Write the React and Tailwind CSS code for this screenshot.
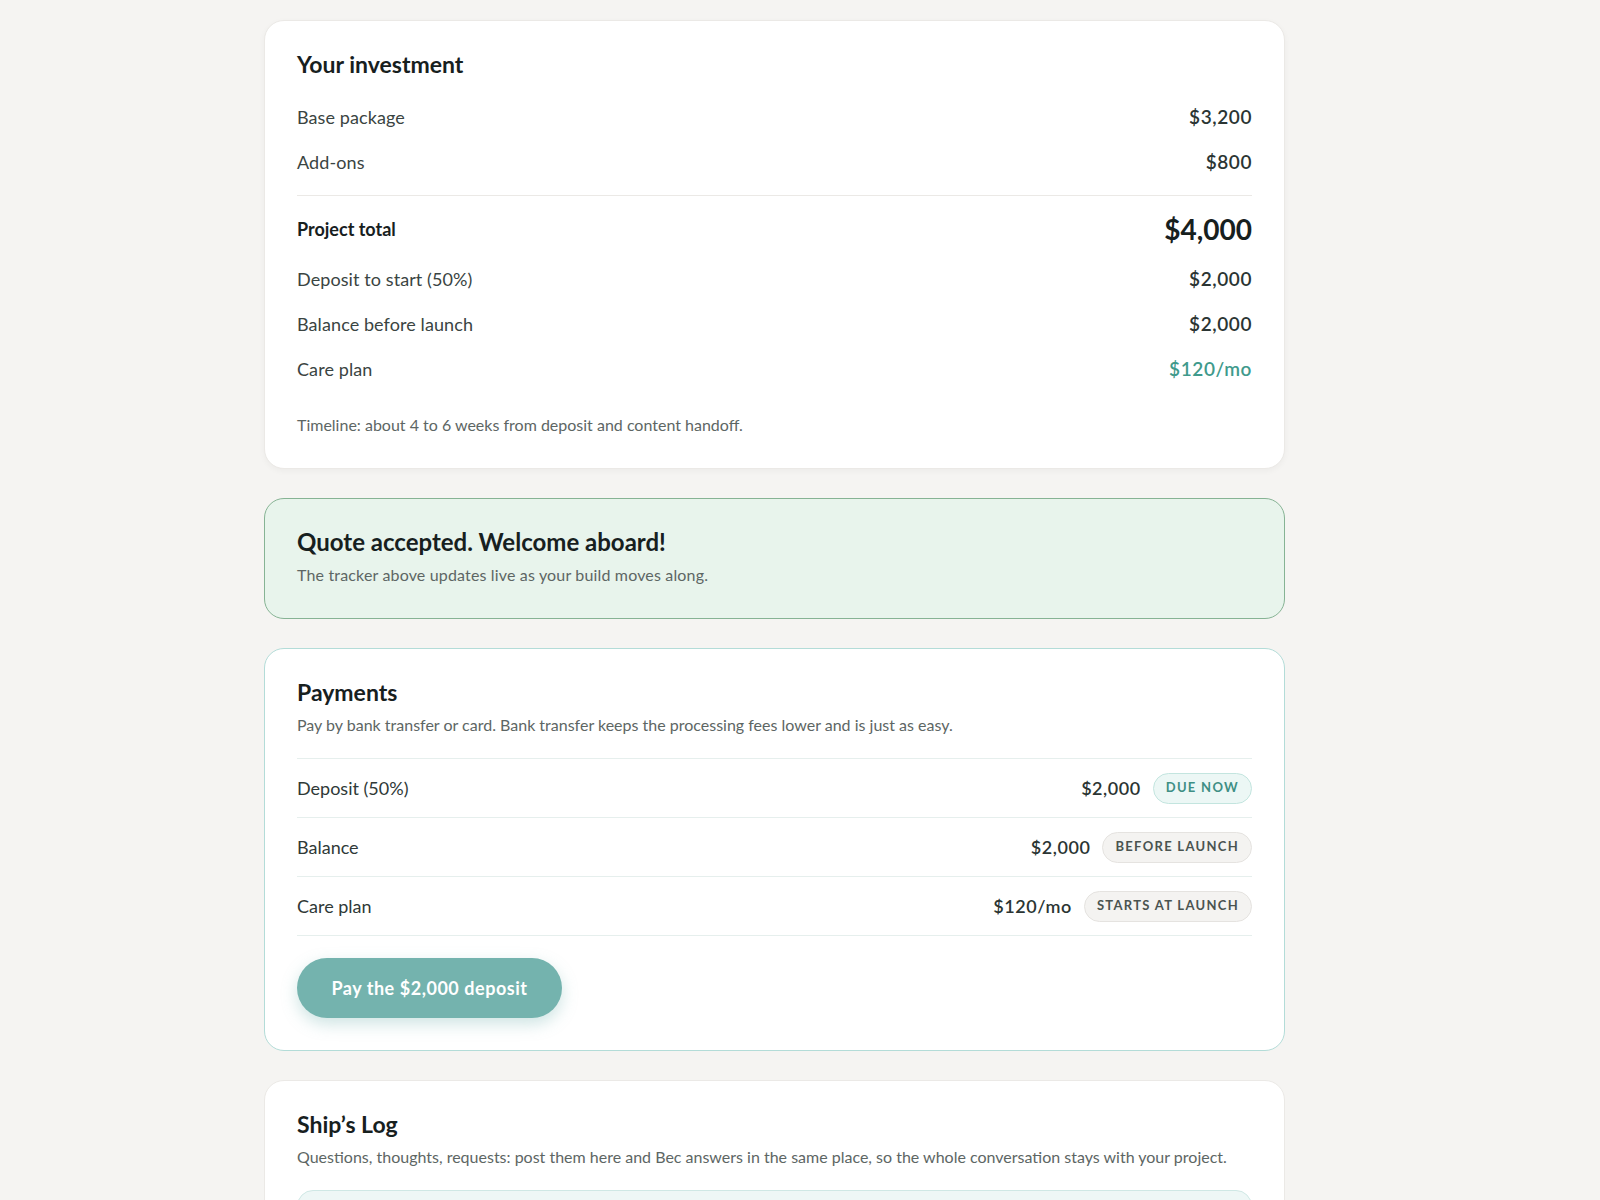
import React from "react";

const font = { fontFamily: "Lato, 'Noto Sans', sans-serif" };

function Row({ label, value, valueClass = "text-[#2b3533] font-semibold" }) {
  return (
    <div className="flex h-[45px] items-center justify-between">
      <span className="text-[18px] tracking-[0.005em] text-[#3a4442]">{label}</span>
      <span className={"text-[19px] tracking-[0.03em] " + valueClass}>{value}</span>
    </div>
  );
}

function PayRow({ label, value, pill, pillClass }) {
  return (
    <div className="flex h-[59px] items-center justify-between border-t border-[#e6efed]">
      <span className="text-[18px] text-[#2f3937]">{label}</span>
      <div className="flex items-center gap-3">
        <span className="text-[18px] font-semibold tracking-[0.03em] text-[#2b3533]">{value}</span>
        <span
          className={
            "flex h-[31px] items-center rounded-full border px-3 text-[13px] font-bold tracking-[0.1em] " +
            pillClass
          }
        >
          {pill}
        </span>
      </div>
    </div>
  );
}

export default function App() {
  return (
    <div className="min-h-[1200px] bg-[#f5f4f2] pb-10 pl-[264px] pt-5" style={font}>
      <div className="flex w-[1021px] flex-col gap-[29px]">
        {/* Investment */}
        <div className="rounded-[20px] border border-[#ebe9e6] bg-white p-8 shadow-[0_2px_6px_rgba(0,0,0,0.04)]">
          <h2 className="text-[23px] font-bold leading-[22px] text-[#17201e]">Your investment</h2>
          <div className="mt-[20px]">
            <Row label="Base package" value="$3,200" />
            <Row label="Add-ons" value="$800" />
          </div>
          <div className="mt-[10px] border-t border-[#ebe9e6]" />
          <div className="mt-[5px] flex h-[56px] items-center justify-between">
            <span className="text-[18px] font-bold text-[#17201e]">Project total</span>
            <span className="text-[28px] font-bold text-[#17201e]">$4,000</span>
          </div>
          <Row label="Deposit to start (50%)" value="$2,000" />
          <Row label="Balance before launch" value="$2,000" />
          <Row label="Care plan" value="$120/mo" valueClass="text-[#3f9a8c] font-semibold" />
          <p className="mt-[21px] text-[16px] leading-[23px] text-[#5d6664]">
            Timeline: about 4 to 6 weeks from deposit and content handoff.
          </p>
        </div>

        {/* Accepted */}
        <div className="rounded-[20px] border border-[#86b394] bg-[#e8f4ec] p-8">
          <h2 className="text-[24px] font-bold leading-[22px] text-[#17201e]">
            Quote accepted. Welcome aboard!
          </h2>
          <p className="mt-[10px] text-[16px] tracking-[0.01em] leading-[23px] text-[#5d6664]">
            The tracker above updates live as your build moves along.
          </p>
        </div>

        {/* Payments */}
        <div className="rounded-[20px] border border-[#b3dcd8] bg-white p-8">
          <h2 className="text-[23px] font-bold leading-[22px] text-[#17201e]">Payments</h2>
          <p className="mt-[10px] text-[16px] leading-[23px] text-[#5d6664]">
            Pay by bank transfer or card. Bank transfer keeps the processing fees lower and is just as easy.
          </p>
          <div className="mt-[22px] border-b border-[#e6efed]">
            <PayRow
              label="Deposit (50%)"
              value="$2,000"
              pill="DUE NOW"
              pillClass="border-[#c3e5df] bg-[#ecf7f5] text-[#3f8f85]"
            />
            <PayRow
              label="Balance"
              value="$2,000"
              pill="BEFORE LAUNCH"
              pillClass="border-[#e5e3e0] bg-[#f4f3f1] text-[#4a5350]"
            />
            <PayRow
              label="Care plan"
              value="$120/mo"
              pill="STARTS AT LAUNCH"
              pillClass="border-[#e5e3e0] bg-[#f4f3f1] text-[#4a5350]"
            />
          </div>
          <button className="mt-[22px] flex h-[60px] w-[265px] items-center justify-center rounded-full bg-[#74b3ae] text-[18px] font-bold tracking-[0.03em] text-white shadow-[0_6px_16px_rgba(116,179,174,0.35)]">
            Pay the $2,000 deposit
          </button>
        </div>

        {/* Ship's Log */}
        <div className="rounded-[20px] border border-[#ebe9e6] bg-white p-8">
          <h2 className="text-[23px] font-bold leading-[22px] text-[#17201e]">Ship’s Log</h2>
          <p className="mt-[10px] text-[16px] leading-[23px] text-[#5d6664]">
            Questions, thoughts, requests: post them here and Bec answers in the same place, so the whole
            conversation stays with your project.
          </p>
          <div className="mt-[22px] h-[200px] rounded-[16px] border border-[#cfe8e5] bg-[#eef7f6]" />
        </div>
      </div>
    </div>
  );
}
